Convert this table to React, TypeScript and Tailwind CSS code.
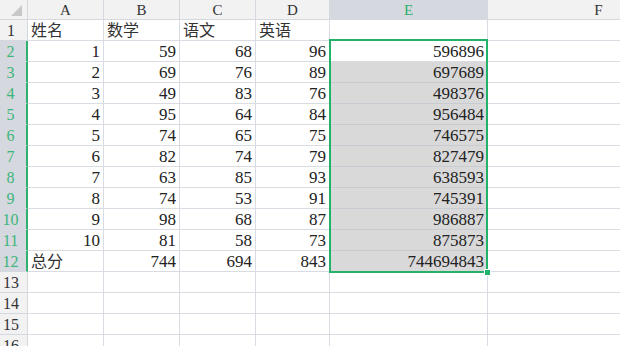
import React from "react";

const cols = [
  { key: "A", w: "w-[76px]" },
  { key: "B", w: "w-[76px]" },
  { key: "C", w: "w-[76px]" },
  { key: "D", w: "w-[74px]" },
  { key: "E", w: "w-[158px]" },
  { key: "F", w: "w-[222px]" },
];

const data: (string | number)[][] = [
  ["姓名", "数学", "语文", "英语", "", ""],
  [1, 59, 68, 96, 596896, ""],
  [2, 69, 76, 89, 697689, ""],
  [3, 49, 83, 76, 498376, ""],
  [4, 95, 64, 84, 956484, ""],
  [5, 74, 65, 75, 746575, ""],
  [6, 82, 74, 79, 827479, ""],
  [7, 63, 85, 93, 638593, ""],
  [8, 74, 53, 91, 745391, ""],
  [9, 98, 68, 87, 986887, ""],
  [10, 81, 58, 73, 875873, ""],
  ["总分", 744, 694, 843, 744694843, ""],
  ["", "", "", "", "", ""],
  ["", "", "", "", "", ""],
  ["", "", "", "", "", ""],
  ["", "", "", "", "", ""],
];

const font = {
  fontFamily: '"Liberation Serif", "Noto Sans CJK SC", serif',
};

export default function App() {
  return (
    <div
      className="relative w-[620px] h-[346px] overflow-hidden bg-white text-[#222]"
      style={font}
    >
      <div className="flex flex-col w-[740px]">
        {/* header row */}
        <div className="flex h-[20px]">
          <div className="relative w-[28px] h-[20px] bg-[#f2f2f2] border-r border-b border-[#d6d8e0]">
            <svg className="absolute left-[11px] top-[5px]" width="11" height="11" viewBox="0 0 11 11">
              <polygon points="11,0 11,11 0,11" fill="#c8c8c8" />
            </svg>
          </div>
          {cols.map((c) => (
            <div
              key={c.key}
              className={`${c.w} h-[20px] flex items-center justify-center pt-[1px] text-[15px] border-r border-b border-[#d6d8e0] ${
                c.key === "E" ? "bg-[#d5d8de] text-[#2fb06e]" : "bg-[#f2f2f2] text-[#333]"
              }`}
            >
              {c.key}
            </div>
          ))}
        </div>
        {data.map((row, ri) => {
          const rowNum = ri + 1;
          const sel = rowNum >= 2 && rowNum <= 12;
          return (
            <div key={ri} className="flex h-[21px]">
              <div
                className={`w-[28px] h-[21px] flex items-center justify-center pr-[5px] pt-[1px] text-[16px] border-b border-[#d6d8e0] ${
                  sel
                    ? "bg-[#d5d8de] text-[#3cb57a] border-r-2 border-r-[#2fb06e]"
                    : "bg-[#f2f2f2] text-[#333] border-r border-r-[#d6d8e0]"
                }`}
              >
                {rowNum}
              </div>
              {cols.map((c, ci) => {
                const v = row[ci];
                const isText = typeof v === "string";
                const shaded = c.key === "E" && rowNum >= 3 && rowNum <= 12;
                return (
                  <div
                    key={c.key}
                    className={`${c.w} h-[21px] flex items-center pt-[1px] leading-none border-r border-b whitespace-nowrap ${
                      shaded ? "bg-[#d9d9d9] border-[#c9cbd3]" : "bg-white border-[#dadce4]"
                    } ${isText ? "justify-start pl-[3px] text-[16px] text-[#333]" : "justify-end pr-[3px] text-[17px]"}`}
                  >
                    {v}
                  </div>
                );
              })}
            </div>
          );
        })}
      </div>
      {/* selection overlay */}
      <div className="absolute left-[329px] top-[39px] w-[159px] h-[234px] border-2 border-[#22b26a] pointer-events-none" />
      <div className="absolute left-[484px] top-[269px] w-[7px] h-[7px] bg-[#22b26a] border border-white" />
    </div>
  );
}
